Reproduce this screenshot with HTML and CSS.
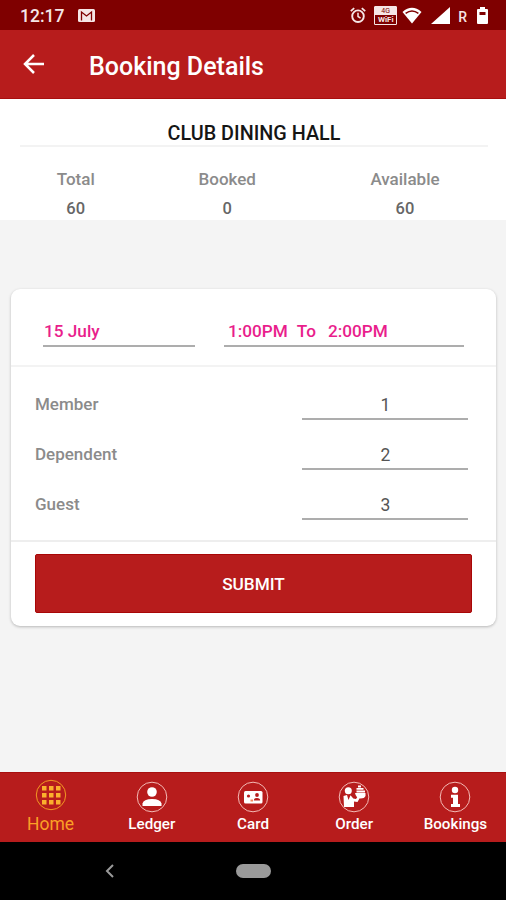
FILE: index.html
```html
<!DOCTYPE html>
<html lang="en">
<head>
  <meta charset="UTF-8">
  <meta name="viewport" content="width=device-width, initial-scale=1.0">
  <title>Booking Details</title>
  <link rel="stylesheet" href="styles.css">
</head>
<body>
  <!-- Status bar -->
  <div class="status-bar">
    <span class="clock">12:17</span>
    <svg class="mail" width="17" height="13" viewBox="0 0 17 13">
      <rect width="17" height="13" rx="1.5" fill="#f6e6e6"/>
      <path d="M3.5 11.5V3l5 4 5-4v8.5" fill="none" stroke="#7f0000" stroke-width="1.3"/>
    </svg>
    <div class="status-icons">
      <svg width="16" height="17" viewBox="0 0 16 17" fill="none" stroke="#f6e6e6">
        <circle cx="8" cy="9.2" r="5.8" stroke-width="1.9"/>
        <path d="M8 5.8v3.7l2.6 1.6" stroke-width="1.5"/>
        <path d="M.8 4.2 4.2 1.2M15.2 4.2l-3.4-3" stroke-width="1.8"/>
      </svg>
      <div class="vowifi"><span>4G</span><b>WiFi</b></div>
      <svg class="wifi" width="20" height="17" viewBox="0 0 20 17">
        <path d="M.5 5Q10-3.4 19.5 5L10 16.5z" fill="#fff"/>
        <path d="M3.6 6.3Q10 1.5 16.4 6.3" fill="none" stroke="#7f0000" stroke-width="1.5"/>
      </svg>
      <svg class="signal" width="19" height="17" viewBox="0 0 19 17">
        <path d="M19 0v17H0z" fill="#fff"/>
      </svg>
      <span class="roaming">R</span>
      <svg class="battery" width="11" height="17" viewBox="0 0 11 17">
        <path d="M3 0h5v2h2q1 0 1 1v13q0 1-1 1H1q-1 0-1-1V3q0-1 1-1h2z" fill="#fff"/>
        <rect x="2.5" y="5" width="6" height="3" fill="#7f0000"/>
      </svg>
    </div>
  </div>

  <!-- App bar -->
  <header class="app-bar">
    <svg width="22" height="20" viewBox="0 0 22 20" fill="none" stroke="#fff" stroke-width="2.5">
      <path d="M21 10H2.5M11 1 2 10l9 9"/>
    </svg>
    <h1>Booking Details</h1>
  </header>

  <section class="summary">
    <h2>CLUB DINING HALL</h2>
    <div class="counts">
      <div class="count"><span class="label">Total</span><span class="value">60</span></div>
      <div class="count"><span class="label">Booked</span><span class="value">0</span></div>
      <div class="count wide"><span class="label">Available</span><span class="value">60</span></div>
    </div>
  </section>

  <!-- Booking form -->
  <main>
    <div class="card">
      <div class="slot">
        <div class="date">15 July</div>
        <div class="time"><span>1:00PM</span><span>To</span><span>2:00PM</span></div>
      </div>
      <div class="people">
        <div class="row"><span class="label">Member</span><span class="field">1</span></div>
        <div class="row"><span class="label">Dependent</span><span class="field">2</span></div>
        <div class="row"><span class="label">Guest</span><span class="field">3</span></div>
      </div>
      <div class="actions">
        <button type="button">SUBMIT</button>
      </div>
    </div>
  </main>

  <!-- Bottom tabs -->
  <nav class="tabs">
    <a class="tab active">
      <svg width="32" height="32" viewBox="0 0 32 32">
        <circle cx="16" cy="16" r="14.7" fill="none" stroke="#f39a22"/>
        <path d="M7 7h4.500v4.500H7zM14 7h4.500v4.500H14zM21 7h4.500v4.500H21zM7 14h4.500v4.500H7zM14 14h4.500v4.500H14zM21 14h4.500v4.500H21zM7 21h4.500v4.500H7zM14 21h4.500v4.500H14zM21 21h4.500v4.500H21z" fill="#fbb02d"/>
      </svg>
      <span>Home</span>
    </a>
    <a class="tab">
      <svg width="32" height="32" viewBox="0 0 32 32">
        <circle cx="16" cy="16" r="14.8" fill="none" stroke="#f3b9b4"/>
        <circle cx="16" cy="11" r="4.8" fill="#fff"/>
        <path d="M6.500 25v-2.500Q7.500 18 16 18t9.500 4.500V25z" fill="#fff"/>
      </svg>
      <span>Ledger</span>
    </a>
    <a class="tab">
      <svg width="32" height="32" viewBox="0 0 32 32">
        <circle cx="16" cy="16" r="14.8" fill="none" stroke="#f3b9b4"/>
        <rect x="7" y="10" width="18.5" height="12.5" rx="1.5" fill="#fff"/>
        <circle cx="11.5" cy="15" r="1.6" fill="#b71c1c"/>
        <path d="M13.500 20.500v-2h2.500v2z" fill="#f4895f"/>
        <circle cx="20" cy="14" r="1.9" fill="#b71c1c"/>
        <path d="M16.800 19.500q0-2.600 3.200-2.600t3.200 2.600z" fill="#b71c1c"/>
      </svg>
      <span>Card</span>
    </a>
    <a class="tab">
      <svg width="32" height="32" viewBox="0 0 32 32">
        <circle cx="16" cy="16" r="14.8" fill="none" stroke="#f3b9b4"/>
        <circle cx="10.3" cy="9.8" r="3.5" fill="#fff"/>
        <path d="M5.500 15 9 14l1.500 5 2-4.800 2.800 3.300 2.700.5 3-4.500 2.200 1-3.700 6.500-3.500-.5V26H6z" fill="#fff"/>
        <path d="M17 12h10.500v3q-1 2.500-5 2.500-4.500-.5-5.500-5.500z" fill="#fff"/>
        <path d="M18.500 10.500h8.500M18.500 7.800h7M20 5.500h3" stroke="#fff" stroke-width="1.8"/>
      </svg>
      <span>Order</span>
    </a>
    <a class="tab">
      <svg width="32" height="32" viewBox="0 0 32 32">
        <circle cx="16" cy="16" r="14.8" fill="none" stroke="#f3b9b4"/>
        <circle cx="16" cy="9" r="3.2" fill="#fff"/>
        <path d="M12 13.800h7V23h2v3h-9v-3h2v-6.200h-2z" fill="#fff"/>
      </svg>
      <span>Bookings</span>
    </a>
  </nav>

  <!-- System navigation -->
  <div class="system-nav">
    <svg width="9" height="14" viewBox="0 0 9 14" fill="none" stroke="#9a9a9a" stroke-width="2">
      <path d="M8 1 2 7l6 6"/>
    </svg>
    <div class="pill"></div>
  </div>
</body>
</html>
```
FILE: styles.css
```css
/* General */
* {
    box-sizing: border-box;
}

body {
    display: flex;
    flex-direction: column;
    height: 900px;
    margin: 0;
    font-family: Roboto, sans-serif;
    background-color: #f4f4f4;
    overflow: hidden;
}

h1, h2 {
    margin: 0;
    font-weight: 500;
}

/* Status bar */
.status-bar {
    display: flex;
    align-items: center;
    height: 30px;
    padding: 1px 18px 0 20px;
    background-color: #7f0000;
    color: #f6e6e6;
}

.clock {
    width: 58px;
    font-size: 17.5px;
    font-weight: 500;
}

.status-icons {
    display: flex;
    align-items: center;
    margin-left: auto;
}

.vowifi {
    width: 23px;
    height: 19px;
    margin-left: 8px;
    border: 1px solid #f6e6e6;
    border-radius: 1px;
    background-color: #f6e6e6;
    color: #7f0000;
    font-size: 7px;
    line-height: 8px;
    text-align: center;
}

.vowifi span,
.vowifi b {
    display: block;
}

.vowifi b {
    height: 9px;
    background-color: #7f0000;
    color: #f6e6e6;
    font-size: 8px;
    line-height: 9px;
}

.wifi {
    margin-left: 5px;
}

.signal {
    margin-left: 9px;
}

.roaming {
    margin-left: 8px;
    padding-top: 2px;
    font-size: 14px;
    font-weight: 500;
}

.battery {
    margin-left: 10px;
}

/* App bar */
.app-bar {
    display: flex;
    align-items: center;
    gap: 44px;
    height: 69px;
    padding: 0 23px;
    background-color: #b71c1c;
    border-bottom: 1px solid #a80f0f;
    color: #fff;
}

.app-bar h1 {
    padding-top: 4px;
    font-size: 25px;
}

/* Hall summary */
.summary {
    height: 121px;
    background-color: #fff;
}

.summary h2 {
    height: 48px;
    margin: 0 18px 0 20px;
    padding-top: 23px;
    border-bottom: 2px solid #f3f3f3;
    color: #151515;
    font-size: 19.8px;
    line-height: 23px;
    text-align: center;
}

.counts {
    display: flex;
    padding-top: 22px;
}

.count {
    display: flex;
    flex: 3;
    flex-direction: column;
    gap: 10px;
    line-height: 20px;
    text-align: center;
}

.count.wide {
    flex: 4;
    padding-left: 1px;
}

.label {
    color: #8b8b8b;
    font-size: 17px;
    font-weight: 500;
}

.value {
    color: #666;
    font-size: 16.5px;
    font-weight: 500;
}

/* Booking card */
main {
    flex: 1;
    padding: 69px 10px 0 11px;
}

.card {
    height: 337px;
    background-color: #fff;
    border-radius: 9px;
    box-shadow: 0 1px 3px rgba(0, 0, 0, 0.25);
}

.slot {
    display: flex;
    gap: 29px;
    height: 78px;
    padding: 30px 32px 0;
    border-bottom: 2px solid #f3f3f3;
    color: #e91e8c;
    font-size: 17.2px;
    font-weight: 500;
    line-height: 24px;
}

.date,
.time {
    height: 28px;
    border-bottom: 2px solid #adadad;
}

.date {
    width: 152px;
    padding-left: 1px;
}

.time {
    display: flex;
    flex: 1;
    padding-left: 4px;
}

.time span:nth-child(2) {
    margin: 0 12px 0 9px;
}

.people {
    height: 175px;
    padding: 24px 28px 0 24px;
    border-bottom: 2px solid #eee;
}

.row {
    display: flex;
    justify-content: space-between;
    height: 50px;
    line-height: 26px;
}

.field {
    width: 166px;
    height: 29px;
    padding: 1px 0 0 1px;
    border-bottom: 2px solid #adadad;
    color: #555;
    font-size: 17.5px;
    text-align: center;
}

.actions {
    padding: 12px 24px;
}

button {
    width: 100%;
    height: 59px;
    padding: 1px 0 0;
    border: 1px solid #a80606;
    border-radius: 2px;
    background-color: #b71c1c;
    color: #fff;
    font-family: inherit;
    font-size: 17.2px;
    font-weight: 500;
}

/* Bottom tabs */
.tabs {
    display: flex;
    height: 70px;
    border-top: 1px solid #a80f0f;
    background-color: #b71c1c;
    color: #fff;
}

.tab {
    display: flex;
    flex: 1;
    flex-direction: column;
    align-items: center;
    padding-top: 8px;
    font-size: 15.2px;
    font-weight: 500;
    line-height: 23px;
}

.tab.active {
    padding-top: 6px;
    color: #fba026;
    font-size: 17.5px;
    font-weight: 400;
    line-height: 27px;
}

/* System navigation */
.system-nav {
    display: flex;
    align-items: center;
    gap: 122px;
    height: 58px;
    padding-left: 105px;
    background-color: #000;
}

.pill {
    width: 35px;
    height: 14px;
    border-radius: 7px;
    background-color: #9a9a9a;
}
```
